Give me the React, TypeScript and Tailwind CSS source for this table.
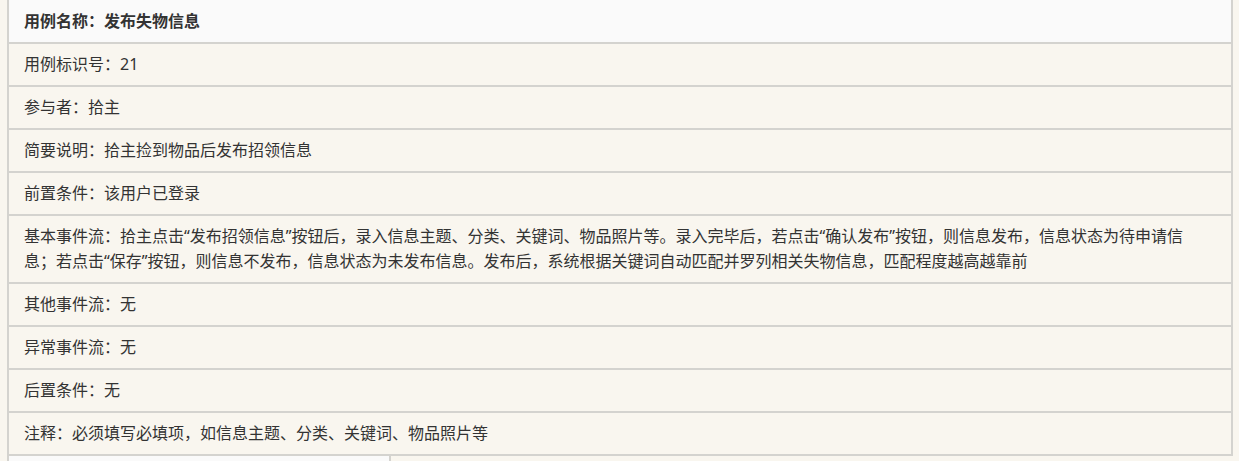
const rows: string[] = [
  "用例标识号：21",
  "参与者：拾主",
  "简要说明：拾主捡到物品后发布招领信息",
  "前置条件：该用户已登录",
  "基本事件流：拾主点击“发布招领信息”按钮后，录入信息主题、分类、关键词、物品照片等。录入完毕后，若点击“确认发布”按钮，则信息发布，信息状态为待申请信息；若点击“保存”按钮，则信息不发布，信息状态为未发布信息。发布后，系统根据关键词自动匹配并罗列相关失物信息，匹配程度越高越靠前",
  "其他事件流：无",
  "异常事件流：无",
  "后置条件：无",
  "注释：必须填写必填项，如信息主题、分类、关键词、物品照片等",
];

export default function App() {
  return (
    <main
      className="min-h-[461px] bg-[#f9f6ef] pl-[7px] pr-[6px] text-[16px] text-[#333333]"
      style={{ fontFamily: '"Noto Sans", "Noto Sans CJK SC", sans-serif' }}
    >
      <div className="border-x-2 border-b-2 border-[#d4d3cf]">
        <div className="h-[44px] border-b-2 border-[#d4d3cf] bg-[#fafafa] pt-[9px] pl-[15px] pr-6 font-bold leading-[24px]">
          用例名称：发布失物信息
        </div>
        {rows.map((text, i) => (
          <div
            key={text}
            className={
              "bg-[#f9f6ef] py-2 pl-[15px] pr-6 leading-[25px] " +
              (i < rows.length - 1 ? "border-b-2 border-[#d4d3cf]" : "")
            }
          >
            {text}
          </div>
        ))}
      </div>
      <div className="flex h-[6px]">
        <div className="w-[384px] border-x-2 border-[#d4d3cf] bg-[#fafafa]" />
      </div>
    </main>
  );
}
